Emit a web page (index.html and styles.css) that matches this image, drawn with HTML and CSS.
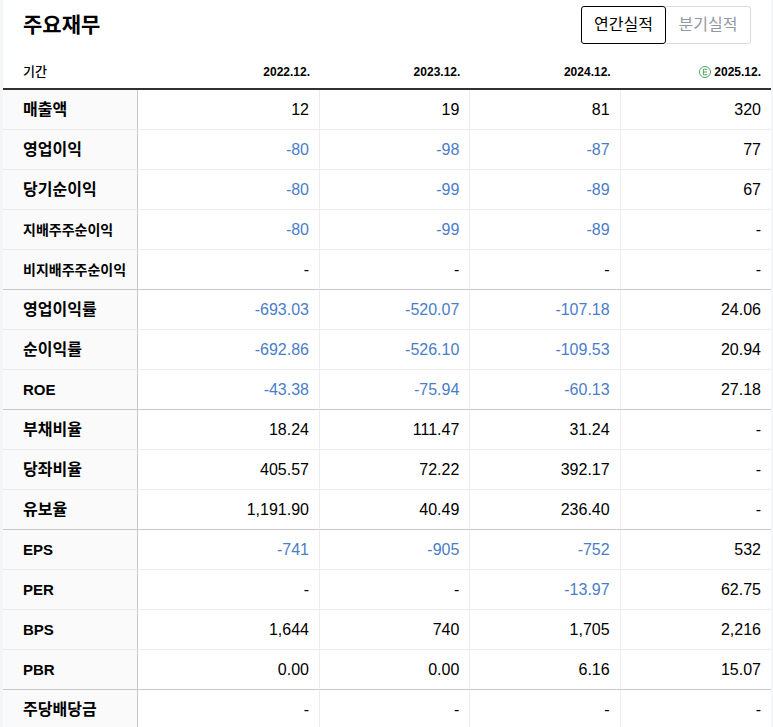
FILE: index.html
```html
<!DOCTYPE html>
<html lang="ko">

<head>
  <meta charset="UTF-8">
  <meta name="viewport" content="width=device-width, initial-scale=1.0">
  <title>주요재무</title>
  <link rel="stylesheet" href="styles.css">
</head>

<body>
  <div class="finance">
    <div class="header">
      <h2 class="title">주요재무</h2>
      <div class="tabs">
        <button type="button" class="tab active">연간실적</button>
        <button type="button" class="tab">분기실적</button>
      </div>
    </div>

    <table class="table">
      <colgroup>
        <col class="col-name">
        <col class="col-first">
        <col>
        <col>
        <col>
      </colgroup>
      <thead>
        <tr>
          <th scope="col" class="period">기간</th>
          <th scope="col">2022.12.</th>
          <th scope="col">2023.12.</th>
          <th scope="col">2024.12.</th>
          <th scope="col">
            <svg class="estimate" viewBox="0 0 12 12" aria-hidden="true">
              <circle cx="6" cy="6" r="5.5" />
              <path d="M8.5 3.2H4.4V8.8H8.5M4.4 6H8.2" />
            </svg>
            2025.12.
          </th>
        </tr>
      </thead>
      <tbody>
        <tr><th scope="row">매출액</th><td>12</td><td>19</td><td>81</td><td>320</td></tr>
        <tr><th scope="row">영업이익</th><td class="minus">-80</td><td class="minus">-98</td><td class="minus">-87</td><td>77</td></tr>
        <tr><th scope="row">당기순이익</th><td class="minus">-80</td><td class="minus">-99</td><td class="minus">-89</td><td>67</td></tr>
        <tr><th scope="row" class="sub">지배주주순이익</th><td class="minus">-80</td><td class="minus">-99</td><td class="minus">-89</td><td>-</td></tr>
        <tr class="last"><th scope="row" class="sub">비지배주주순이익</th><td>-</td><td>-</td><td>-</td><td>-</td></tr>
      </tbody>
      <tbody>
        <tr><th scope="row">영업이익률</th><td class="minus">-693.03</td><td class="minus">-520.07</td><td class="minus">-107.18</td><td>24.06</td></tr>
        <tr><th scope="row">순이익률</th><td class="minus">-692.86</td><td class="minus">-526.10</td><td class="minus">-109.53</td><td>20.94</td></tr>
        <tr class="last"><th scope="row" class="latin">ROE</th><td class="minus">-43.38</td><td class="minus">-75.94</td><td class="minus">-60.13</td><td>27.18</td></tr>
      </tbody>
      <tbody>
        <tr><th scope="row">부채비율</th><td>18.24</td><td>111.47</td><td>31.24</td><td>-</td></tr>
        <tr><th scope="row">당좌비율</th><td>405.57</td><td>72.22</td><td>392.17</td><td>-</td></tr>
        <tr class="last"><th scope="row">유보율</th><td>1,191.90</td><td>40.49</td><td>236.40</td><td>-</td></tr>
      </tbody>
      <tbody>
        <tr><th scope="row" class="latin">EPS</th><td class="minus">-741</td><td class="minus">-905</td><td class="minus">-752</td><td>532</td></tr>
        <tr><th scope="row" class="latin">PER</th><td>-</td><td>-</td><td class="minus">-13.97</td><td>62.75</td></tr>
        <tr><th scope="row" class="latin">BPS</th><td>1,644</td><td>740</td><td>1,705</td><td>2,216</td></tr>
        <tr class="last"><th scope="row" class="latin">PBR</th><td>0.00</td><td>0.00</td><td>6.16</td><td>15.07</td></tr>
      </tbody>
      <tbody>
        <tr><th scope="row">주당배당금</th><td>-</td><td>-</td><td>-</td><td>-</td></tr>
      </tbody>
    </table>
  </div>
</body>

</html>
```

FILE: styles.css
```css
* {
  box-sizing: border-box;
}

body {
  margin: 0;
  padding: 0 2px 0 3px;
  background: #f4f5f7;
  color: #000;
  font-family: "Liberation Sans", "Noto Sans CJK KR", sans-serif;
}

.finance {
  background: #fff;
}

.header {
  display: flex;
  justify-content: space-between;
  align-items: flex-start;
  padding: 6px 20px 10px;
}

.title {
  margin: 0;
  font-size: 21px;
  line-height: 38px;
}

.tabs {
  display: flex;
}

.tab {
  width: 85px;
  height: 38px;
  padding: 0;
  border: 1px solid #d9dbde;
  border-left: 0;
  border-radius: 0 3px 3px 0;
  background: #fff;
  color: #93979f;
  font-family: inherit;
  font-size: 16px;
  line-height: 34px;
}

.tab.active {
  border: 1px solid #000;
  border-radius: 3px;
  color: #000;
}

.table {
  width: 100%;
  border-collapse: separate;
  border-spacing: 0;
  table-layout: fixed;
}

.col-name {
  width: 135px;
}

.col-first {
  width: 182px;
}

.table th,
.table td {
  height: 40px;
  padding: 0 10px;
  border-right: 1px solid #ececee;
  border-bottom: 1px solid #ececee;
  font-size: 16px;
  line-height: 24px;
  text-align: right;
  white-space: nowrap;
}

.table thead th {
  height: 36px;
  padding-top: 2px;
  border-right: 0;
  border-bottom: 2px solid #333033;
  font-size: 12px;
}

.table thead .period {
  padding-left: 20px;
  font-size: 13px;
  font-weight: 500;
  text-align: left;
}

.table tbody th {
  padding: 0 0 0 20px;
  border-right-color: #c8c8ca;
  background: #fafafa;
  text-align: left;
}

.table tbody .sub {
  font-size: 14px;
}

.table tbody .latin {
  font-size: 15px;
}

.table td:last-child {
  border-right: 0;
}

.table .last th,
.table .last td {
  border-bottom-color: #c8c8ca;
}

.minus {
  color: #4a7dc9;
}

.estimate {
  width: 12px;
  height: 12px;
  vertical-align: -2px;
  fill: none;
  stroke: #4aa566;
}
```
